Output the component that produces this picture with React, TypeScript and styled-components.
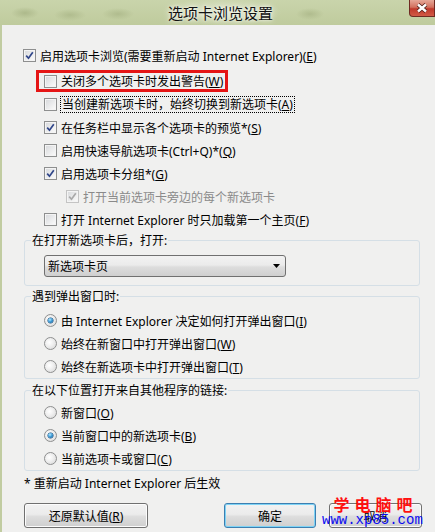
import styled, { createGlobalStyle } from 'styled-components';

const GlobalStyle = createGlobalStyle`
  html, body {
    margin: 0;
    padding: 0;
    background: #f0f0ef;
  }
  body {
    font-family: "Noto Sans", "Noto Sans CJK SC", sans-serif;
    font-size: 12px;
    color: #000;
  }
`;

const Window = styled.div`
  position: relative;
  width: 435px;
  height: 532px;
  display: flex;
  flex-direction: column;
  overflow: hidden;
  background: #f0f0ef;
`;

const TitleBar = styled.div`
  flex: none;
  height: 25px;
  display: grid;
  grid-template-columns: 1fr auto 1fr;
  padding-left: 6px;
  background:
    radial-gradient(ellipse 14px 6px at 25px 13px, #adb98b, transparent),
    radial-gradient(ellipse 16px 6px at 70px 15px, #b0bc8e, transparent),
    radial-gradient(ellipse 16px 6px at 118px 14px, #b0bc8e, transparent),
    radial-gradient(ellipse 14px 6px at 310px 14px, #b0bc8e, transparent),
    radial-gradient(ellipse 60px 14px at 222px 12px, #dde4c8, transparent),
    linear-gradient(#c9d4ab, #bfcb9d);
`;

const Title = styled.div`
  grid-column: 2;
  align-self: center;
  font-size: 15px;
  line-height: 20px;
  color: #111;
  text-shadow: 0 0 6px rgba(255, 255, 255, 0.9), 0 0 3px rgba(255, 255, 255, 0.8);
`;

const CloseButton = styled.div`
  grid-column: 3;
  justify-self: end;
  align-self: start;
  width: 26px;
  height: 17px;
  box-sizing: border-box;
  border: 1px solid #6f2a22;
  border-top: none;
  border-radius: 0 0 0 4px;
  background: linear-gradient(#e6a898 0%, #d3715f 45%, #c0392b 55%, #d15a46 100%);
  display: grid;
  place-items: center;
`;

const Body = styled.div`
  flex: 1;
  display: flex;
  flex-direction: column;
  align-items: flex-start;
  border-left: 2px solid #c1cca1;
  padding: 19px 15px 0 21px;
`;

const Option = styled.div<{ $indent?: number; $disabled?: boolean }>`
  display: flex;
  align-items: center;
  gap: 4px;
  height: 23px;
  margin-left: ${p => p.$indent ?? 0}px;
  color: ${p => (p.$disabled ? '#8a8a8a' : '#000')};
  white-space: nowrap;
`;

const Highlight = styled.div`
  display: flex;
  align-items: center;
  height: 16px;
  margin: 3px 0 1px 13px;
  padding: 0 2px 0 5px;
  border: 3px solid #e51515;
`;

const Box = styled.span<{ $disabled?: boolean }>`
  flex: none;
  width: 13px;
  height: 13px;
  box-sizing: border-box;
  display: grid;
  place-items: center;
  border: 1px solid ${p => (p.$disabled ? '#c4c4c4' : '#8e8f8f')};
  background: linear-gradient(135deg, #d6d8db 0%, #f7f7f7 85%);
  box-shadow: inset 0 0 0 1px #f4f4f4;
`;

const Round = styled.span`
  flex: none;
  width: 13px;
  height: 13px;
  box-sizing: border-box;
  display: grid;
  place-items: center;
  border: 1px solid #8e8f8f;
  border-radius: 50%;
  background: radial-gradient(circle at 40% 40%, #ffffff 0%, #f0f0f0 40%, #d4d4d4 100%);
`;

const Dot = styled.span`
  width: 5px;
  height: 5px;
  border-radius: 50%;
  background: radial-gradient(circle at 40% 35%, #b8ecff 0%, #3c9ad6 45%, #0f4d86 100%);
  box-shadow: 0 0 0 0.5px #1b4f7d;
`;

const Focus = styled.span`
  outline: 1px dotted #000;
  outline-offset: 0;
  padding: 0 1px;
  line-height: 15px;
`;

const Group = styled.fieldset<{ $gap?: number }>`
  align-self: stretch;
  margin: ${p => p.$gap ?? 0}px 0 0 1px;
  padding: 0 6px 0 6px;
  min-width: 0;
  border: 1px solid #d5dfe6;
  border-radius: 3px;
`;

const Legend = styled.legend`
  padding: 0 1px;
  line-height: 15px;
  white-space: nowrap;
`;

const GroupContent = styled.div<{ $top: number; $bottom: number }>`
  display: flex;
  flex-direction: column;
  align-items: flex-start;
  padding: ${p => p.$top}px 0 ${p => p.$bottom}px 13px;
`;

const Select = styled.div`
  width: 242px;
  height: 22px;
  box-sizing: border-box;
  display: flex;
  align-items: center;
  justify-content: space-between;
  padding: 0 5px 0 3px;
  border: 1px solid #707070;
  border-radius: 3px;
  background: linear-gradient(#f2f2f2 0%, #ebebeb 45%, #dddddd 55%, #cfcfcf 100%);
`;

const Note = styled.div`
  margin: 5px 0 0 1px;
  line-height: 16px;
`;

const ButtonRow = styled.div`
  align-self: stretch;
  display: flex;
  justify-content: space-between;
  margin: 11px -2px 0 1px;
`;

const ButtonPair = styled.div`
  display: flex;
  gap: 13px;
`;

const Button = styled.div<{ $width: number; $default?: boolean }>`
  width: ${p => p.$width}px;
  height: 25px;
  box-sizing: border-box;
  display: grid;
  place-items: center;
  border: 1px solid ${p => (p.$default ? '#3c7fb1' : '#707070')};
  border-radius: 3px;
  background: linear-gradient(#f2f2f2 0%, #ebebeb 45%, #dddddd 55%, #cfcfcf 100%);
  box-shadow: ${p => (p.$default ? 'inset 0 0 0 1px #7ed3f5' : 'inset 0 0 0 1px #fcfcfc')};
`;

const Watermark = styled.div`
  position: absolute;
  left: 322px;
  top: 495px;
  display: flex;
  flex-direction: column;
  align-items: center;
  pointer-events: none;
`;

const MarkTitle = styled.span`
  font-family: "Noto Sans CJK SC", sans-serif;
  font-weight: 700;
  font-size: 16px;
  line-height: 18px;
  letter-spacing: 5px;
  margin-left: 6px;
  color: #ff1010;
`;

const MarkUrl = styled.span`
  font-family: "Liberation Mono", monospace;
  font-size: 14px;
  line-height: 14px;
  color: #0a0af0;
`;

const Check = ({ disabled }: { disabled?: boolean }) => (
  <svg width="9" height="9" viewBox="0 0 9 9">
    <path
      d="M1.2 4.6 L3.5 7.2 L7.8 1.2"
      fill="none"
      stroke={disabled ? '#a9a9a9' : '#30468a'}
      strokeWidth="1.7"
    />
  </svg>
);

const CheckBox = ({ checked, disabled }: { checked?: boolean; disabled?: boolean }) => (
  <Box $disabled={disabled}>{checked && <Check disabled={disabled} />}</Box>
);

const Radio = ({ checked }: { checked?: boolean }) => <Round>{checked && <Dot />}</Round>;

const App = () => {
  return (
    <Window>
      <GlobalStyle />
      <TitleBar>
        <Title>选项卡浏览设置</Title>
        <CloseButton>
          <svg width="12" height="10" viewBox="0 0 12 10">
            <path d="M2 1.5 L10 8.5 M10 1.5 L2 8.5" stroke="#4a1a14" strokeWidth="4" />
            <path d="M2 1.5 L10 8.5 M10 1.5 L2 8.5" stroke="#ffffff" strokeWidth="2.4" />
          </svg>
        </CloseButton>
      </TitleBar>
      <Body>
        <Option>
          <CheckBox checked />
          <span>
            启用选项卡浏览(需要重新启动 Internet Explorer)(<u>E</u>)
          </span>
        </Option>
        <Highlight>
          <Option>
            <CheckBox />
            <span>
              关闭多个选项卡时发出警告(<u>W</u>)
            </span>
          </Option>
        </Highlight>
        <Option $indent={21}>
          <CheckBox />
          <Focus>
            当创建新选项卡时，始终切换到新选项卡(<u>A</u>)
          </Focus>
        </Option>
        <Option $indent={21}>
          <CheckBox checked />
          <span>
            在任务栏中显示各个选项卡的预览*(<u>S</u>)
          </span>
        </Option>
        <Option $indent={21}>
          <CheckBox />
          <span>
            启用快速导航选项卡(Ctrl+Q)*(<u>Q</u>)
          </span>
        </Option>
        <Option $indent={21}>
          <CheckBox checked />
          <span>
            启用选项卡分组*(<u>G</u>)
          </span>
        </Option>
        <Option $indent={43} $disabled>
          <CheckBox checked disabled />
          <span>打开当前选项卡旁边的每个新选项卡</span>
        </Option>
        <Option $indent={21}>
          <CheckBox />
          <span>
            打开 Internet Explorer 时只加载第一个主页(<u>F</u>)
          </span>
        </Option>

        <Group $gap={2}>
          <Legend>在打开新选项卡后，打开:</Legend>
          <GroupContent $top={7} $bottom={8}>
            <Select>
              <span>新选项卡页</span>
              <svg width="7" height="4" viewBox="0 0 7 4">
                <path d="M0 0 H7 L3.5 4 Z" fill="#000" />
              </svg>
            </Select>
          </GroupContent>
        </Group>

        <Group $gap={3}>
          <Legend>遇到弹出窗口时:</Legend>
          <GroupContent $top={5} $bottom={0}>
            <Option>
              <Radio checked />
              <span>
                由 Internet Explorer 决定如何打开弹出窗口(<u>I</u>)
              </span>
            </Option>
            <Option>
              <Radio />
              <span>
                始终在新窗口中打开弹出窗口(<u>W</u>)
              </span>
            </Option>
            <Option>
              <Radio />
              <span>
                始终在新选项卡中打开弹出窗口(<u>T</u>)
              </span>
            </Option>
          </GroupContent>
        </Group>

        <Group $gap={4}>
          <Legend>在以下位置打开来自其他程序的链接:</Legend>
          <GroupContent $top={3} $bottom={0}>
            <Option>
              <Radio />
              <span>
                新窗口(<u>O</u>)
              </span>
            </Option>
            <Option>
              <Radio checked />
              <span>
                当前窗口中的新选项卡(<u>B</u>)
              </span>
            </Option>
            <Option>
              <Radio />
              <span>
                当前选项卡或窗口(<u>C</u>)
              </span>
            </Option>
          </GroupContent>
        </Group>

        <Note>* 重新启动 Internet Explorer 后生效</Note>

        <ButtonRow>
          <Button $width={124}>
            <span>
              还原默认值(<u>R</u>)
            </span>
          </Button>
          <ButtonPair>
            <Button $width={92} $default>
              确定
            </Button>
            <Button $width={93}>取消</Button>
          </ButtonPair>
        </ButtonRow>
      </Body>
      <Watermark>
        <MarkTitle>学电脑吧</MarkTitle>
        <MarkUrl>www.xp85.com</MarkUrl>
      </Watermark>
    </Window>
  );
};

export default App;
